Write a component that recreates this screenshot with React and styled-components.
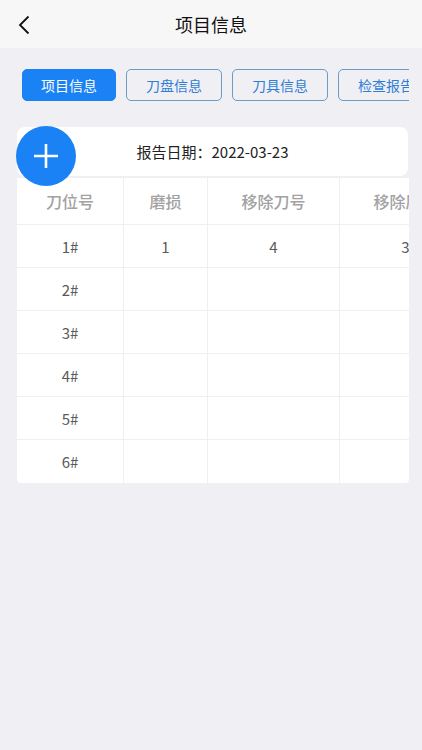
import React from "react";
import styled, { createGlobalStyle } from "styled-components";

const GlobalStyle = createGlobalStyle`
  html, body {
    margin: 0;
    padding: 0;
    background: #efeff4;
    font-family: "Noto Sans CJK SC", "Noto Sans", sans-serif;
  }
`;

const Page = styled.div`
  width: 422px;
  min-height: 750px;
  background: #efeff4;
`;

const Header = styled.div`
  height: 48px;
  background: #f7f7f8;
  display: flex;
  align-items: center;
  justify-content: center;
  position: relative;
`;

const BackButton = styled.div`
  position: absolute;
  left: 14px;
  top: 13px;
  width: 20px;
  height: 24px;
  display: flex;
  align-items: center;
  justify-content: center;
`;

const Title = styled.h1`
  margin: 0;
  font-size: 18px;
  font-weight: 400;
  color: #111;
`;

const TabStrip = styled.div`
  margin: 21px 13px 0 22px;
  display: flex;
  gap: 10px;
  overflow: hidden;
`;

const Tab = styled.div`
  flex: none;
  height: 32px;
  box-sizing: border-box;
  padding: ${p => (p.$active ? "0 18px" : "0 19px")};
  border-radius: 5px;
  display: flex;
  align-items: center;
  font-size: 14px;
  border: 1px solid ${p => (p.$active ? "#1a82f5" : "#6a9bc9")};
  background: ${p => (p.$active ? "#1a82f5" : "transparent")};
  color: ${p => (p.$active ? "#fff" : "#2f7ed4")};
`;

const Content = styled.div`
  margin: 26px 13px 0 17px;
  position: relative;
`;

const DateCard = styled.div`
  height: 49px;
  background: #fff;
  border-radius: 8px;
  display: flex;
  align-items: center;
  justify-content: center;
  font-size: 15px;
  color: #222;
  margin-right: 1px;
`;

const AddButton = styled.div`
  position: absolute;
  left: -1px;
  top: -1px;
  width: 60px;
  height: 60px;
  border-radius: 50%;
  background: #1a82f5;
  display: flex;
  align-items: center;
  justify-content: center;
`;

const TableWrap = styled.div`
  margin-top: 2px;
  overflow: hidden;
  background: #fff;
  border-radius: 0 0 4px 4px;
`;

const Table = styled.div`
  display: grid;
  grid-template-columns: 107px 84px 132px 132px;
  width: max-content;
`;

const Cell = styled.div`
  height: ${p => (p.$head ? "47px" : "43px")};
  box-sizing: border-box;
  display: flex;
  align-items: center;
  justify-content: center;
  border-right: 1px solid #efefef;
  border-bottom: ${p => (p.$last ? "none" : "1px solid #efefef")};
  font-size: ${p => (p.$head ? "16px" : "15px")};
  font-weight: ${p => (p.$head ? 500 : 400)};
  color: ${p => (p.$head ? "#a2a2a2" : "#5a5a5a")};
  white-space: nowrap;
`;

const tabs = ["项目信息", "刀盘信息", "刀具信息", "检查报告"];
const columns = ["刀位号", "磨损", "移除刀号", "移除原因"];
const rows = [
  ["1#", "1", "4", "3"],
  ["2#", "", "", ""],
  ["3#", "", "", ""],
  ["4#", "", "", ""],
  ["5#", "", "", ""],
  ["6#", "", "", ""]
];

export default function App() {
  return (
    <Page>
      <GlobalStyle />
      <Header>
        <BackButton>
          <svg width="12" height="20" viewBox="0 0 12 20">
            <path d="M10.5 1.5 L2 10 L10.5 18.5" fill="none" stroke="#111" strokeWidth="1.8" />
          </svg>
        </BackButton>
        <Title>项目信息</Title>
      </Header>
      <TabStrip>
        {tabs.map((t, i) => (
          <Tab key={t} $active={i === 0}>
            {t}
          </Tab>
        ))}
      </TabStrip>
      <Content>
        <DateCard>报告日期：2022-03-23</DateCard>
        <TableWrap>
          <Table>
            {columns.map(c => (
              <Cell key={c} $head>
                {c}
              </Cell>
            ))}
            {rows.map((r, ri) =>
              r.map((v, ci) => (
                <Cell key={ri + "-" + ci} $last={ri === rows.length - 1}>
                  {v}
                </Cell>
              ))
            )}
          </Table>
        </TableWrap>
        <AddButton>
          <svg width="26" height="26" viewBox="0 0 26 26">
            <path d="M13 1 V25 M1 13 H25" stroke="#fff" strokeWidth="2.6" />
          </svg>
        </AddButton>
      </Content>
    </Page>
  );
}
